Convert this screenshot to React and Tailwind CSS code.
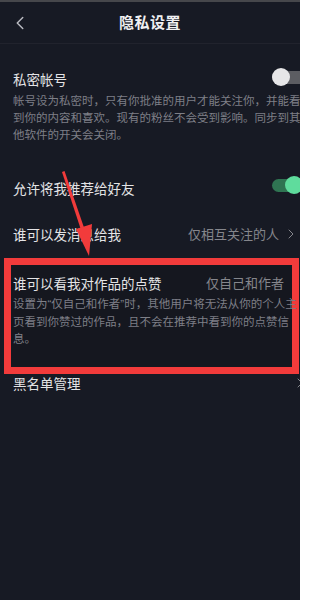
import { ChevronLeft, ChevronRight } from "lucide-react";

const font = { fontFamily: '"Noto Sans CJK SC", "Noto Sans", sans-serif' };
const narrow = { fontFamily: '"Liberation Sans", sans-serif' };

// small switch, cut off by the right edge like in the app screenshot
const Toggle = ({ on }) => (
  <div className="relative h-[18px] w-[36px] shrink-0">
    <div
      className={
        "absolute left-0 top-[3px] h-[13px] w-[36px] rounded-full " +
        (on ? "bg-[#2f7452]" : "bg-[#5c5d62]")
      }
    />
    <div
      className={
        "absolute top-0 h-[18px] w-[18px] rounded-full " +
        (on ? "left-[13px] bg-[#5fdc9d]" : "left-0 bg-[#e6e6e8]")
      }
    />
  </div>
);

const App = () => {
  return (
    <div
      className="relative h-[600px] w-[300px] overflow-hidden bg-[#171a24] text-[#e4e4e6]"
      style={font}
    >
      {/* top strip */}
      <div className="h-[2px] bg-[#46474b]" />

      {/* header */}
      <div className="relative flex h-[42px] items-center justify-center border-b border-[#21232d]">
        <ChevronLeft
          className="absolute left-[9px] top-[10px] text-[#b9bac0]"
          size={22}
          strokeWidth={1.6}
        />
        <span className="text-[15px] font-bold tracking-[0.5px] text-[#f0f0f2]">隐私设置</span>
      </div>

      {/* private account */}
      <div className="mt-[25px] flex items-center justify-between pl-[13px]">
        <span className="text-[13.5px] leading-[20px]">私密帐号</span>
        <div className="mr-[-8px] mt-[-4px]">
          <Toggle on={false} />
        </div>
      </div>
      <div className="mt-[3px] overflow-hidden pl-[13px] text-[11.5px] leading-[17px] text-[#7e7f87] whitespace-nowrap">
        <div>帐号设为私密时，只有你批准的用户才能关注你，并能看</div>
        <div>到你的内容和喜欢。现有的粉丝不会受到影响。同步到其</div>
        <div>他软件的开关会关闭。</div>
      </div>

      {/* recommend to friends */}
      <div className="mt-[35px] flex items-center justify-between pl-[13px]">
        <span className="text-[13.5px] leading-[20px]">允许将我推荐给好友</span>
        <div className="mr-[-8px] mt-[-6px]">
          <Toggle on />
        </div>
      </div>

      {/* messages */}
      <div className="mt-[26px] flex items-center justify-between pl-[13px] pr-[1px]">
        <span className="text-[13.5px] leading-[20px]">谁可以发消息给我</span>
        <div className="flex items-center text-[#85868c]">
          <span className="text-[13px] leading-[20px]">仅相互关注的人</span>
          <ChevronRight size={16} strokeWidth={1.5} className="ml-[4px]" />
        </div>
      </div>

      {/* highlighted likes row */}
      <div className="ml-[4px] mr-[1px] mt-[14px] border-[7px] border-[#f23b3b] bg-[#15171f] pb-[20px] pl-[2px] pr-[8px] pt-[8px]">
        <div className="flex items-center justify-between">
          <span className="text-[13.5px] leading-[20px]">谁可以看我对作品的点赞</span>
          <span className="text-[13px] leading-[20px] text-[#85868c]">仅自己和作者</span>
        </div>
        <div className="mr-[-8px] mt-[2px] text-[11.5px] leading-[17px] text-[#7e7f87] whitespace-nowrap">
          <div>
            设置为<span style={narrow}>“</span>仅自己和作者<span style={narrow}>”</span>时，其他用户将无法从你的个人主
          </div>
          <div>页看到你赞过的作品，且不会在推荐中看到你的点赞信</div>
          <div>息。</div>
        </div>
      </div>

      {/* blacklist */}
      <div className="mt-[1px] flex items-center justify-between pl-[13px]">
        <span className="text-[13.5px] leading-[16px]">黑名单管理</span>
        <ChevronRight size={16} strokeWidth={1.5} className="mr-[-8px] text-[#85868c]" />
      </div>

      {/* red annotation arrow */}
      <svg
        className="pointer-events-none absolute left-0 top-0"
        width="300"
        height="600"
        viewBox="0 0 300 600"
      >
        <polygon points="62,172 64.5,171 84.5,229 81,230" fill="#f23b3b" />
        <polygon points="76,229 92,224 89,256" fill="#f23b3b" />
      </svg>
    </div>
  );
};

export default App;
